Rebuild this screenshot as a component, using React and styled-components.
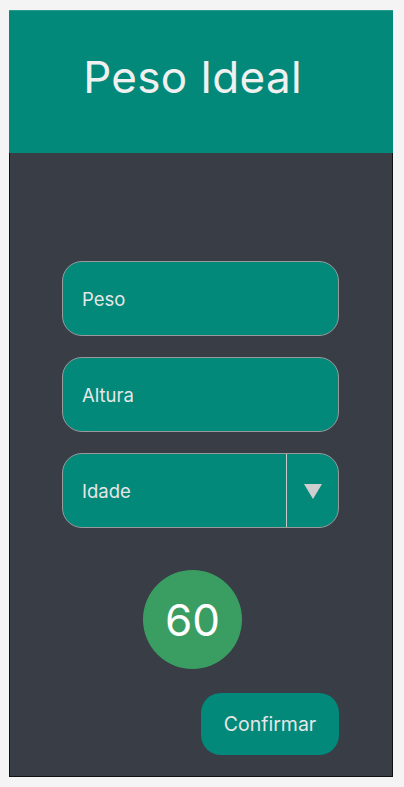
import React, { useState } from 'react'
import styled, { createGlobalStyle } from 'styled-components'

const GlobalStyle = createGlobalStyle`
  body {
    margin: 0;
    background: #f4f4f4;
    font-family: Inter, "Noto Sans", sans-serif;
  }
`

const App = () => {
  const [idade] = useState(60)

  return (
    <>
      <GlobalStyle />
      <Screen>
        <Header>
          <Title>Peso Ideal</Title>
        </Header>
        <Body>
          <Form>
            <Field>Peso</Field>
            <Field>Altura</Field>
            <Select>
              <SelectLabel>Idade</SelectLabel>
              <Arrow>
                <svg width="18" height="15" viewBox="0 0 18 15">
                  <polygon points="0,0 18,0 9,15" fill="#cfcfcf" />
                </svg>
              </Arrow>
            </Select>
          </Form>
          <Result>{idade}</Result>
          <Actions>
            <Button>Confirmar</Button>
          </Actions>
        </Body>
      </Screen>
    </>
  )
}

const Screen = styled.div`
  width: 384px;
  height: 767px;
  margin: 10px 0 0 9px;
  display: flex;
  flex-direction: column;
`

const Header = styled.header`
  height: 143px;
  background: #02897a;
  border-top: 1px solid #2a9a8c;
  box-sizing: border-box;
  display: flex;
  align-items: center;
  justify-content: center;
  padding-right: 17px;
`

const Title = styled.h1`
  margin: 0 0 10px;
  font-weight: 400;
  font-size: 44px;
  color: #f0f0f0;
  letter-spacing: 0.3px;
`

const Body = styled.main`
  flex: 1;
  background: #393d46;
  border: 1px solid #111;
  border-top: none;
  padding: 108px 53px 0 52px;
  display: flex;
  flex-direction: column;
`

const Form = styled.div`
  display: flex;
  flex-direction: column;
  gap: 21px;
`

const Field = styled.div`
  height: 75px;
  box-sizing: border-box;
  border: 1px solid #9a9a9a;
  border-radius: 20px;
  background: #02897a;
  display: flex;
  align-items: center;
  padding-left: 19px;
  font-size: 18.5px;
  color: #e6e6e6;
`

const Select = styled(Field)`
  padding-left: 0;
  overflow: hidden;
`

const SelectLabel = styled.span`
  flex: 1;
  padding-left: 19px;
`

const Arrow = styled.div`
  width: 52px;
  height: 100%;
  border-left: 1px solid #c8c8c8;
  display: flex;
  align-items: center;
  justify-content: center;
  padding-top: 2px;
  box-sizing: border-box;
`

const Result = styled.div`
  align-self: center;
  margin: 42px 16px 0 0;
  width: 99px;
  height: 99px;
  border-radius: 50%;
  background: #3a9e63;
  color: #fff;
  font-size: 44px;
  display: flex;
  align-items: center;
  justify-content: center;
`

const Actions = styled.div`
  display: flex;
  justify-content: flex-end;
  margin-top: 24px;
`

const Button = styled.button`
  width: 138px;
  height: 62px;
  border: none;
  border-radius: 20px;
  background: #02897a;
  color: #e6e6e6;
  font-family: Inter, "Noto Sans", sans-serif;
  font-size: 19.5px;
  cursor: pointer;
`

export default App
